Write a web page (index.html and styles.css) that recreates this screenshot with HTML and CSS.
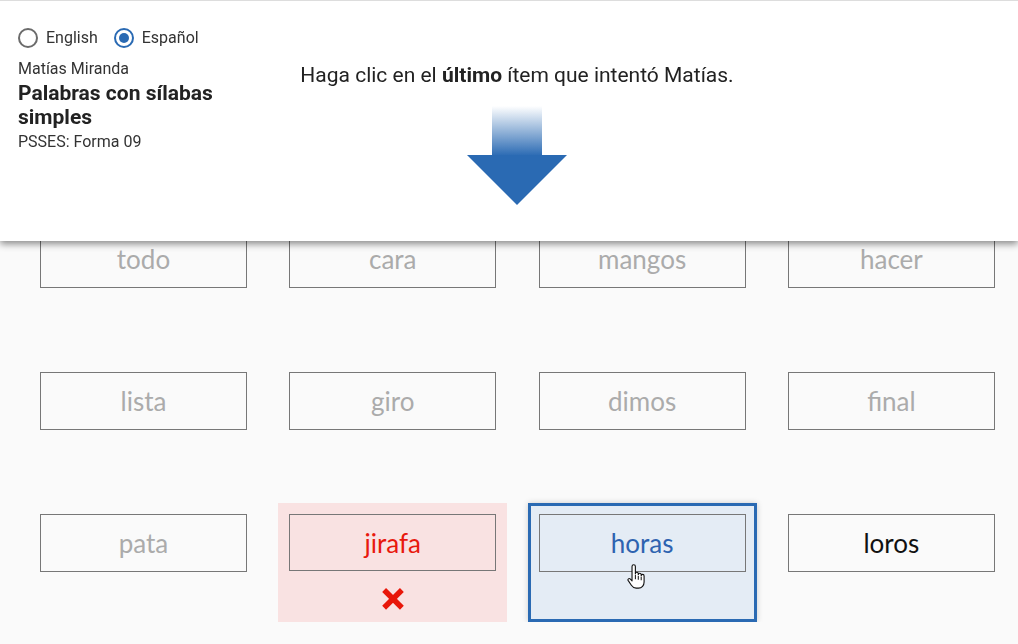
FILE: index.html
```html
<!DOCTYPE html>
<html lang="es">
<head>
    <meta charset="UTF-8">
    <meta name="viewport" content="width=device-width, initial-scale=1.0">
    <title>Palabras con sílabas simples</title>
    <link rel="stylesheet" href="styles.css">
</head>
<body>
    <header class="topbar">
        <div class="info">
            <div class="lang">
                <label class="radio"><span class="dot"></span>English</label>
                <label class="radio checked"><span class="dot"></span>Español</label>
            </div>
            <div class="student">Matías Miranda</div>
            <div class="title">Palabras con sílabas simples</div>
            <div class="form-name">PSSES: Forma 09</div>
        </div>

        <div class="prompt">
            <p>Haga clic en el <b>último</b> ítem que intentó Matías.</p>
            <svg class="arrow" width="100" height="100" viewBox="0 0 100 100">
                <defs>
                    <linearGradient id="shaft" x1="0" y1="0" x2="0" y2="1">
                        <stop offset="0" stop-color="#2a6ab3" stop-opacity="0"/>
                        <stop offset="1" stop-color="#2a6ab3"/>
                    </linearGradient>
                </defs>
                <rect x="25" y="0" width="50" height="50" fill="url(#shaft)"/>
                <polygon points="0,49 100,49 50,99" fill="#2a6ab3"/>
            </svg>
        </div>
        <div></div>
    </header>

    <main class="grid">
        <div class="cell"><div class="word">todo</div></div>
        <div class="cell"><div class="word">cara</div></div>
        <div class="cell"><div class="word">mangos</div></div>
        <div class="cell"><div class="word">hacer</div></div>

        <div class="cell"><div class="word">lista</div></div>
        <div class="cell"><div class="word">giro</div></div>
        <div class="cell"><div class="word">dimos</div></div>
        <div class="cell"><div class="word">final</div></div>

        <div class="cell"><div class="word">pata</div></div>
        <div class="cell wrong">
            <div class="word">jirafa</div>
            <svg class="mark" width="24" height="24" viewBox="0 0 24 24">
                <path d="M3 3 L21 21 M21 3 L3 21" stroke="#e8170a" stroke-width="5.5" fill="none"/>
            </svg>
        </div>
        <div class="cell selected">
            <div class="word">horas</div>
            <svg class="cursor" width="19" height="26" viewBox="0 0 17 23">
                <path d="M4.5 2a1.5 1.5 0 0 1 3 0V8.5a1.3 1.3 0 0 1 2.6 0V9.5a1.3 1.3 0 0 1 2.6 0V10.5a1.3 1.3 0 0 1 2.6 0V16c0 3-2 5.5-5 5.5H8.2c-2 0-3.2-1-4.3-2.6L1 14.5c-.6-1 .8-2.2 1.8-1.3L4.5 15Z" fill="#fff" stroke="#111" stroke-width="1" stroke-linejoin="round"/>
                <path d="M7.5 9.5v4M10.1 10.5v3.5M12.7 11.5v3" stroke="#111" stroke-width="0.9"/>
            </svg>
        </div>
        <div class="cell"><div class="word current">loros</div></div>
    </main>
</body>
</html>
```

FILE: styles.css
```css
body {
    margin: 0;
    background: #fafafa;
    font-family: Roboto, "Liberation Sans", sans-serif;
    color: #333333;
}

/* header that stays on top of the word grid */
.topbar {
    position: fixed;
    top: 0;
    left: 0;
    right: 0;
    height: 241px;
    box-sizing: border-box;
    background: #ffffff;
    border-top: 1px solid #dddddd;
    box-shadow: 0 3px 7px rgba(0, 0, 0, 0.45);
    display: grid;
    grid-template-columns: 1fr auto 1fr;
    padding: 27px 2px 0 18px;
    z-index: 10;
}

.info {
    width: 225px;
}

.lang {
    display: flex;
    gap: 16px;
    margin-bottom: 11px;
}

.radio {
    display: flex;
    align-items: center;
    gap: 8px;
    font-size: 16px;
    line-height: 20px;
}

.dot {
    width: 20px;
    height: 20px;
    box-sizing: border-box;
    border: 2px solid #6b6b6b;
    border-radius: 50%;
    display: flex;
    align-items: center;
    justify-content: center;
}

.radio.checked .dot {
    border-color: #2a6ab3;
}

.radio.checked .dot::after {
    content: "";
    width: 10px;
    height: 10px;
    border-radius: 50%;
    background: #2a6ab3;
}

.student {
    font-size: 16px;
    line-height: 19px;
}

.title {
    font-size: 21px;
    font-weight: bold;
    line-height: 24px;
    margin-top: 3px;
    color: #222222;
}

.form-name {
    font-size: 16px;
    line-height: 19px;
    margin-top: 3px;
}

.prompt {
    display: flex;
    flex-direction: column;
    align-items: center;
}

.prompt p {
    margin: 35px 0 0 0;
    font-size: 21px;
    line-height: 24px;
    color: #222222;
}

.arrow {
    display: block;
    margin-top: 19px;
}

/* word grid */
.grid {
    display: grid;
    grid-template-columns: repeat(4, 229px);
    column-gap: 20.3px;
    row-gap: 23px;
    padding: 219px 0 0 29px;
}

.cell {
    position: relative;
    height: 119px;
    box-sizing: border-box;
    border: 3px solid transparent;
    padding: 8px;
    display: flex;
    flex-direction: column;
    align-items: center;
}

.word {
    width: 100%;
    height: 58px;
    box-sizing: border-box;
    border: 1px solid #777777;
    display: flex;
    align-items: center;
    justify-content: center;
    font-family: Lato, "Liberation Sans", sans-serif;
    font-size: 26px;
    color: #ababab;
}

.word.current {
    color: #111111;
}

.wrong {
    background: #f9e2e2;
}

.wrong .word {
    color: #e8190e;
}

.mark {
    margin-top: 16px;
}

.selected {
    background: #e4ecf5;
    border-color: #2a6ab3;
    box-shadow: 0 0 6px rgba(0, 0, 0, 0.18);
}

.selected .word {
    color: #2e63b0;
}

.cursor {
    position: absolute;
    left: 96px;
    top: 58px;
}
```
